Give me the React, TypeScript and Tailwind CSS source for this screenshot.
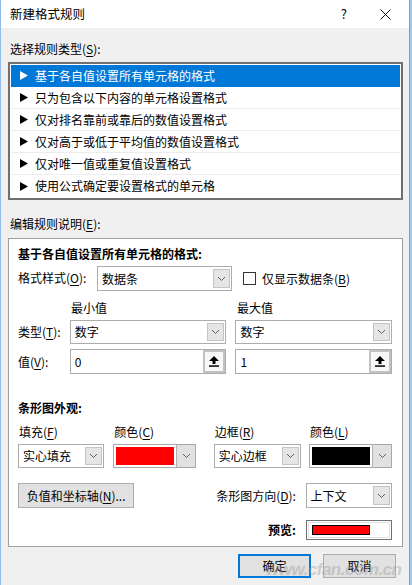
import React from "react";

const rules = [
  "基于各自值设置所有单元格的格式",
  "只为包含以下内容的单元格设置格式",
  "仅对排名靠前或靠后的数值设置格式",
  "仅对高于或低于平均值的数值设置格式",
  "仅对唯一值或重复值设置格式",
  "使用公式确定要设置格式的单元格",
];

function Key({ k }: { k: string }) {
  return (
    <>
      (<span className="underline underline-offset-2">{k}</span>)
    </>
  );
}

function Chevron() {
  return (
    <svg width="9" height="6" viewBox="0 0 9 6">
      <polyline points="1,1 4.5,4.5 8,1" fill="none" stroke="#606060" strokeWidth="1" />
    </svg>
  );
}

function DropBtn() {
  return (
    <div className="mr-[1px] flex h-[calc(100%-4px)] w-[17px] shrink-0 items-center justify-center border border-[#c4c4c4] bg-[#e5e5e5]">
      <Chevron />
    </div>
  );
}

function Select({ text, className }: { text: string; className: string }) {
  return (
    <div className={`flex items-center border border-[#acacac] bg-white ${className}`}>
      <span className="flex-1 pl-[4px]">{text}</span>
      <DropBtn />
    </div>
  );
}

function ColorSelect({ color }: { color: string }) {
  return (
    <div className="flex h-[24px] w-[83px] items-stretch border border-[#a8a8a8] bg-white">
      <div className="flex flex-1 p-[2px]">
        <div className="flex-1" style={{ backgroundColor: color }} />
      </div>
      <div className="flex w-[19px] items-center justify-center border-l border-[#b0b0b0] bg-[#e1e1e1]">
        <Chevron />
      </div>
    </div>
  );
}

function SpinInput({ value }: { value: string }) {
  return (
    <div className="flex h-[25px] items-stretch border border-[#acacac] bg-white">
      <span className="flex flex-1 items-center pl-[4px]">{value}</span>
      <div className="flex w-[22px] items-center justify-center border-2 border-[#c2c2c2] bg-[#f7f7f7]">
        <svg width="10" height="11" viewBox="0 0 10 11">
          <polygon points="5,0 10,5 6.5,5 6.5,8 3.5,8 3.5,5 0,5" fill="#000" />
          <rect x="0" y="9.3" width="10" height="1.5" fill="#000" />
        </svg>
      </div>
    </div>
  );
}

export default function App() {
  return (
    <div className="relative flex h-[585px] w-[412px] overflow-hidden font-['Noto_Sans_CJK_SC',sans-serif] text-[12px] leading-[16px] text-black">
      <div className="flex flex-1 flex-col border-l border-[#8fbde8] bg-[#f0f0f0]">
        {/* title bar */}
        <div className="flex h-[28px] items-center bg-white pl-[9px]">
          <span className="flex-1 text-[12.5px]">新建格式规则</span>
          <span className="mr-[33px] text-[13px]">?</span>
          <svg width="11" height="11" viewBox="0 0 11 11" className="mr-[18px]">
            <path d="M0.5 0.5 L10.5 10.5 M10.5 0.5 L0.5 10.5" stroke="#111" strokeWidth="1" />
          </svg>
        </div>

        <div className="flex flex-col pl-[7px]">
          <div className="mt-[13px] pl-[2px]">
            选择规则类型<Key k="S" />:
          </div>

          {/* rule list */}
          <div className="mt-[5px] w-[395px] border-2 border-[#707070] bg-white p-[1px]">
            {rules.map((r, i) => (
              <div
                key={r}
                className={`flex h-[22px] items-center gap-[7px] border-b pl-[9px] ${
                  i === 0 ? "border-[#0078d7] bg-[#0078d7] text-white" : "border-[#ececec]"
                } ${i === rules.length - 1 ? "border-b-0" : ""}`}
              >
                <svg width="8" height="9" viewBox="0 0 8 9">
                  <polygon points="0,0 8,4.5 0,9" fill={i === 0 ? "#fff" : "#000"} />
                </svg>
                <span>{r}</span>
              </div>
            ))}
          </div>

          <div className="mt-[16px] pl-[2px]">
            编辑规则说明<Key k="E" />:
          </div>

          {/* edit panel */}
          <div className="mt-[6px] flex h-[309px] w-[395px] flex-col border border-[#a0a0a0] bg-white pl-[9px] pr-[10px]">
            <div className="mt-[7px] font-bold">基于各自值设置所有单元格的格式:</div>

            <div className="mt-[4px] flex items-center">
              <span className="-mt-[2px] w-[79px]">
                格式样式<Key k="O" />:
              </span>
              <Select text="数据条" className="h-[25px] w-[135px]" />
              <div className="ml-[11px] h-[13px] w-[13px] border border-[#333]" />
              <span className="ml-[6px]">
                仅显示数据条<Key k="B" />
              </span>
            </div>

            <div className="mt-[9px] flex">
              <span className="ml-[53px] w-[166px]">最小值</span>
              <span>最大值</span>
            </div>

            <div className="mt-[4px] flex items-center">
              <span className="w-[52px]">
                类型<Key k="T" />:
              </span>
              <Select text="数字" className="h-[24px] w-[157px]" />
              <Select text="数字" className="ml-[9px] h-[24px] w-[157px]" />
            </div>

            <div className="mt-[5px] flex items-center">
              <span className="w-[52px]">
                值<Key k="V" />:
              </span>
              <div className="w-[157px]">
                <SpinInput value="0" />
              </div>
              <div className="ml-[9px] w-[157px]">
                <SpinInput value="1" />
              </div>
            </div>

            <div className="mt-[26px] font-bold">条形图外观:</div>

            <div className="mt-[8px] flex">
              <div className="flex w-[96px] flex-col">
                <span className="pl-[1px]">
                  填充<Key k="F" />
                </span>
                <Select text="实心填充" className="mt-[4px] h-[24px] w-[86px]" />
              </div>
              <div className="flex w-[101px] flex-col">
                <span className="pl-[1px]">
                  颜色<Key k="C" />
                </span>
                <div className="mt-[4px]">
                  <ColorSelect color="#ff0000" />
                </div>
              </div>
              <div className="flex w-[96px] flex-col">
                <span className="pl-[1px]">
                  边框<Key k="R" />
                </span>
                <Select text="实心边框" className="mt-[4px] h-[24px] w-[87px]" />
              </div>
              <div className="flex flex-col">
                <span className="pl-[1px]">
                  颜色<Key k="L" />
                </span>
                <div className="mt-[4px]">
                  <ColorSelect color="#000000" />
                </div>
              </div>
            </div>

            <div className="mt-[15px] flex items-center">
              <button className="flex h-[25px] w-[117px] items-center justify-center border border-[#adadad] bg-[#e1e1e1]">
                负值和坐标轴<Key k="N" />...
              </button>
              <span className="ml-[82px] w-[90px]">
                条形图方向<Key k="D" />:
              </span>
              <Select text="上下文" className="h-[25px] w-[87px]" />
            </div>

            <div className="mt-[12px] flex items-center justify-end">
              <span className="mr-[10px] font-bold">预览:</span>
              <div className="flex h-[20px] w-[86px] items-center border border-[#707070] bg-white p-[1px]">
                <div className="flex h-full w-full items-center border border-[#e0e0e0] pl-[3px]">
                  <div className="h-[10px] w-[58px] border border-black bg-[#ff0000]" />
                </div>
              </div>
            </div>
          </div>

          {/* buttons */}
          <div className="mt-[7px] flex w-[395px] justify-end gap-[12px] pr-[7px]">
            <button className="flex h-[24px] w-[73px] items-center justify-center border-2 border-[#0078d7] bg-[#e1e1e1]">
              确定
            </button>
            <button className="flex h-[24px] w-[73px] items-center justify-center border border-[#adadad] bg-[#e1e1e1]">
              取消
            </button>
          </div>
        </div>
      </div>
      <div className="w-[1px] bg-[#9a9a9a]" />
      <div className="w-[2px] bg-[#9ccaf2]" />

      <span className="pointer-events-none absolute left-[266px] top-[562px] font-['Liberation_Sans',sans-serif] text-[17px] font-bold italic tracking-[-0.5px] text-[#9a9a9a] opacity-40">
        www.cfan.com.cn
      </span>
    </div>
  );
}
